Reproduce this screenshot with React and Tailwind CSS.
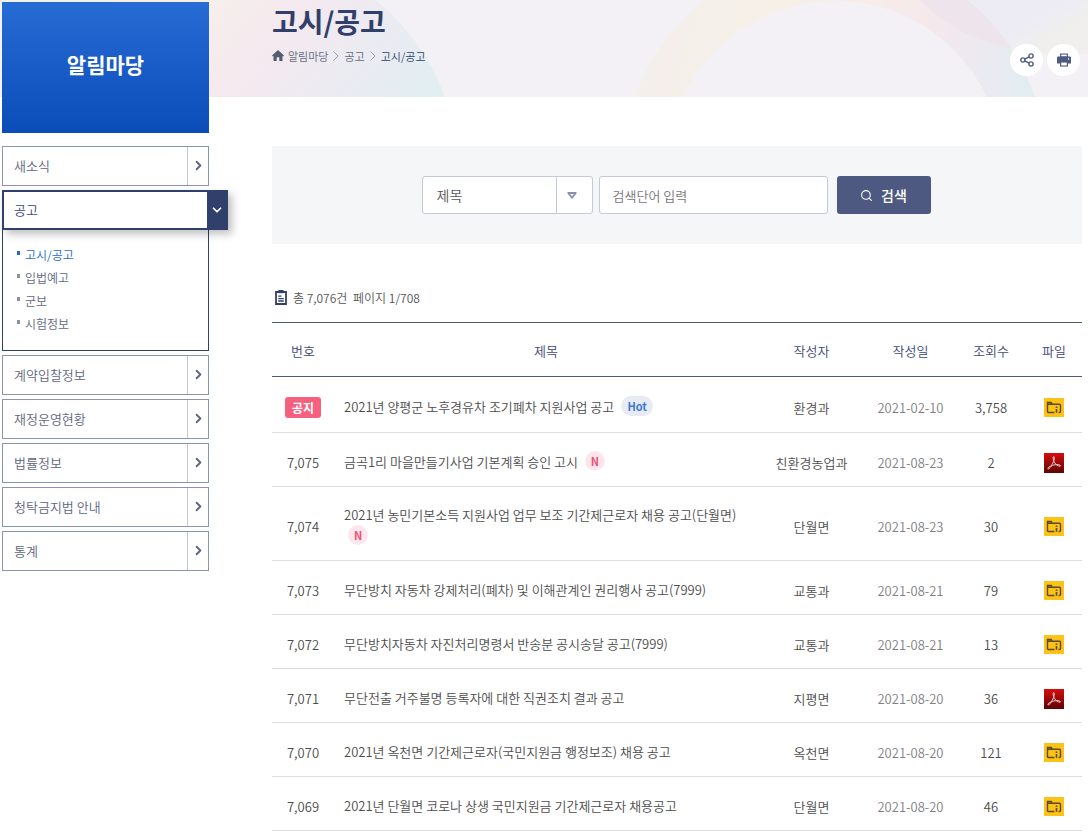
import React from 'react';
import clsx from 'clsx';
import { ChevronDown, ChevronRight, Search } from 'lucide-react';

const menuTop = ['새소식'];
const menuBottom = ['계약입찰정보', '재정운영현황', '법률정보', '청탁금지법 안내', '통계'];
const subMenu = ['고시/공고', '입법예고', '군보', '시험정보'];

const notices = [
  { no: '공지', notice: true, title: '2021년 양평군 노후경유차 조기폐차 지원사업 공고', badge: 'Hot', dept: '환경과', date: '2021-02-10', views: '3,758', file: 'zip' },
  { no: '7,075', title: '금곡1리 마을만들기사업 기본계획 승인 고시', badge: 'N', dept: '친환경농업과', date: '2021-08-23', views: '2', file: 'pdf' },
  { no: '7,074', title: '2021년 농민기본소득 지원사업 업무 보조 기간제근로자 채용 공고(단월면)', badge: 'N', dept: '단월면', date: '2021-08-23', views: '30', file: 'zip' },
  { no: '7,073', title: '무단방치 자동차 강제처리(폐차) 및 이해관계인 권리행사 공고(7999)', dept: '교통과', date: '2021-08-21', views: '79', file: 'zip' },
  { no: '7,072', title: '무단방치자동차 자진처리명령서 반송분 공시송달 공고(7999)', dept: '교통과', date: '2021-08-21', views: '13', file: 'zip' },
  { no: '7,071', title: '무단전출 거주불명 등록자에 대한 직권조치 결과 공고', dept: '지평면', date: '2021-08-20', views: '36', file: 'pdf' },
  { no: '7,070', title: '2021년 옥천면 기간제근로자(국민지원금 행정보조) 채용 공고', dept: '옥천면', date: '2021-08-20', views: '121', file: 'zip' },
  { no: '7,069', title: '2021년 단월면 코로나 상생 국민지원금 기간제근로자 채용공고', dept: '단월면', date: '2021-08-20', views: '46', file: 'zip' },
];

const HeaderBackground = () => (
  <div className="absolute inset-x-0 top-0 h-[97px] overflow-hidden bg-[#f3f1f5]" aria-hidden="true">
    <svg width="1088" height="97" viewBox="0 0 1088 97" fill="none">
      <defs>
        <linearGradient id="disc" gradientUnits="userSpaceOnUse" x1="200" y1="-10" x2="400" y2="150">
          <stop offset="0" stopColor="#f6f0ea" />
          <stop offset="0.35" stopColor="#f4e9ef" />
          <stop offset="0.65" stopColor="#ebebf2" />
          <stop offset="1" stopColor="#e0eff2" />
        </linearGradient>
        <linearGradient id="ring" gradientUnits="userSpaceOnUse" x1="635" y1="0" x2="1037" y2="90">
          <stop offset="0" stopColor="#f3f1ed" />
          <stop offset="0.1" stopColor="#f5eeeb" />
          <stop offset="0.2" stopColor="#f5f0e9" />
          <stop offset="0.45" stopColor="#f6efe4" />
          <stop offset="0.72" stopColor="#f5e8ec" />
          <stop offset="0.84" stopColor="#ece9f1" />
          <stop offset="1" stopColor="#e1eef1" />
        </linearGradient>
        <linearGradient id="corner" gradientUnits="userSpaceOnUse" x1="1034" y1="22" x2="1045" y2="42">
          <stop offset="0" stopColor="#edecf4" />
          <stop offset="1" stopColor="#f0efed" />
        </linearGradient>
      </defs>
      <circle cx="244" cy="168" r="213" fill="url(#disc)" />
      <path d="M920 0C944 24 975 42 1015 54H1088V0Z" fill="url(#corner)" />
      <circle cx="835" cy="168" r="190" stroke="url(#ring)" strokeWidth="45" />
      <path d="M920 0C944 24 975 42 1011 48A213 213 0 0 0 967 0Z" fill="#eee4eb" />
    </svg>
  </div>
);

const MenuLink = ({ label }) => (
  <a href="#" className="flex h-10 border border-[#8a93b2] text-[#5f6680]">
    <span className="flex-1 pl-[11px] text-[13px] leading-[38px]">{label}</span>
    <span className="flex w-[21px] items-center justify-center border-l border-[#c5c8d4] pb-[2px]">
      <ChevronRight size={15} strokeWidth={3} />
    </span>
  </a>
);

const Sidebar = () => (
  <aside className="w-[207px] shrink-0">
    <h2 className="flex h-[131px] items-center justify-center bg-linear-to-b from-[#276bd5] to-[#0b4db8] pb-[6px] text-[21px] font-bold text-white">
      알림마당
    </h2>
    <nav className="mt-[13px] flex flex-col gap-1">
      {menuTop.map((label) => (
        <MenuLink key={label} label={label} />
      ))}
      <div>
        <a href="#" className="relative -mr-[19px] flex h-10 border-2 border-[#313f6b] bg-white text-[#3d4977] shadow-[4px_4px_8px_rgba(0,0,0,0.25)]">
          <span className="flex-1 pl-[10px] text-[13px] leading-9">공고</span>
          <span className="flex w-[19px] items-center justify-center bg-[#313f6b] text-white">
            <ChevronDown size={14} strokeWidth={3} />
          </span>
        </a>
        <ul className="border border-t-0 border-[#313f6b] pt-[13px] pb-[15px] pl-[14px]">
          {subMenu.map((label, i) => (
            <li key={label} className={clsx('flex h-[23px] gap-[5px] text-[12px] leading-[23px]', i === 0 ? 'text-[#2469d0]' : 'text-[#626880]')}>
              <span className={clsx('mt-2 h-1 w-[3px]', i === 0 ? 'bg-[#2469d0]' : 'bg-[#8c90a3]')} />
              <a href="#">{label}</a>
            </li>
          ))}
        </ul>
      </div>
      {menuBottom.map((label) => (
        <MenuLink key={label} label={label} />
      ))}
    </nav>
  </aside>
);

const Crumb = () => (
  <svg width="6" height="10" viewBox="0 0 6 10" fill="none" stroke="#9a9dac" className="mx-[5px]">
    <path d="M0.5 0.5L5 5L0.5 9.5" />
  </svg>
);

const PageHeader = () => (
  <header className="flex h-[97px] justify-between">
    <div>
      <h1 className="mt-px text-[28px] leading-10 font-bold text-[#313f6b]">고시/공고</h1>
      <nav className="mt-[5px] flex h-5 items-center text-[11px] leading-5 text-[#626880]">
        <svg width="12" height="11" viewBox="0 0 12 11" fill="#545b73" className="mr-1 mb-[2px]">
          <path d="M6 0L12 5.5L11.2 6.4L10.5 5.8V11H7.3V7.3H4.7V11H1.5V5.8L0.8 6.4L0 5.5Z" />
        </svg>
        <a href="#">알림마당</a>
        <Crumb />
        <a href="#">공고</a>
        <Crumb />
        <a href="#" className="text-[#313f6b]">고시/공고</a>
      </nav>
    </div>
    <div className="mt-11 mr-[2px] flex gap-1">
      <button type="button" aria-label="공유" className="flex h-8 w-[33px] items-center justify-center rounded-full bg-white">
        <svg width="14" height="14" viewBox="0 0 14 14" fill="none" stroke="#4f5a82" strokeWidth="1.4">
          <circle cx="2.9" cy="7" r="2.1" />
          <circle cx="11" cy="3" r="2.1" />
          <circle cx="11" cy="11" r="2.1" />
          <path d="M4.8 6.1L9.1 3.9M4.8 7.9L9.1 10.1" />
        </svg>
      </button>
      <button type="button" aria-label="인쇄" className="flex h-8 w-[33px] items-center justify-center rounded-full bg-white">
        <svg width="14" height="14" viewBox="0 0 14 14">
          <path d="M3 0.5H11V4H3Z" fill="#4f5a82" />
          <path d="M4.2 1.6H9.8V3.4H4.2Z" fill="#fff" />
          <path d="M1 3.6H13Q14 3.6 14 4.6V10.6H0V4.6Q0 3.6 1 3.6Z" fill="#4f5a82" />
          <path d="M3 8.4H11V13.6H3Z" fill="#4f5a82" />
          <path d="M4.2 9.6H9.8V12.5H4.2Z" fill="#fff" />
          <path d="M11 5.2H12.2V6.4H11Z" fill="#fff" />
        </svg>
      </button>
    </div>
  </header>
);

const SearchBar = () => (
  <form className="mt-[49px] flex h-[98px] items-center justify-center bg-[#f5f6f8] pr-[2px]" onSubmit={(e) => e.preventDefault()}>
    <div className="relative">
      <select aria-label="검색 구분" className="h-[38px] w-[171px] appearance-none rounded-[3px] border border-[#c4c8d8] bg-white pl-[14px] text-[14px] text-[#555]">
        <option>제목</option>
        <option>내용</option>
      </select>
      <span className="pointer-events-none absolute inset-y-px right-px flex w-9 items-center justify-center border-l border-[#c4c8d8]">
        <svg width="10" height="7" viewBox="0 0 10 7" fill="none" stroke="#8a90aa" strokeWidth="1.8" strokeLinejoin="round" className="mr-1">
          <path d="M1.2 1H8.8L5 5.8Z" />
        </svg>
      </span>
    </div>
    <input
      type="text"
      aria-label="검색단어"
      placeholder="검색단어 입력"
      className="ml-[6px] h-[38px] w-[229px] rounded-[3px] border border-[#c4c8d8] bg-white px-[13px] text-[13px] placeholder:text-[#757575]"
    />
    <button type="submit" className="ml-[9px] flex h-[38px] w-[94px] items-center justify-center gap-2 rounded-[3px] bg-[#4e5981] text-[14px] font-medium text-white">
      <Search size={13} strokeWidth={2} />
      검색
    </button>
  </form>
);

const FileIcon = ({ type }) =>
  type === 'pdf' ? (
    <svg width="20" height="20" viewBox="0 0 20 20" fill="none" className="mx-auto block">
      <defs>
        <linearGradient id="pdf" x1="0" y1="0" x2="0" y2="1">
          <stop offset="0" stopColor="#d80c0c" />
          <stop offset="1" stopColor="#5c0505" />
        </linearGradient>
      </defs>
      <rect width="20" height="20" fill="url(#pdf)" />
      <path
        d="M9.6 3.6C8.6 4 9.2 7 10.3 9.2C11.6 11.6 14.4 13.5 16.2 13.2C17.2 12.6 15.4 11.5 12.6 11.6C9 11.8 4.6 13.6 3.9 15.2C3.6 16.4 5.4 16 7 13.4C8.8 10.6 10.6 6.6 10.3 4.4Q10 3.4 9.6 3.6Z"
        stroke="#f3dede"
        strokeWidth="0.9"
      />
    </svg>
  ) : (
    <svg width="20" height="19" viewBox="0 0 20 19" fill="none" className="mx-auto block">
      <rect width="20" height="19" fill="#fdc218" />
      <path d="M10.4 14.5H4.6Q3.5 14.5 3.5 13.4V4.5H7.2L8.4 6.3H15.4Q16.5 6.3 16.5 7.4V13.4Q16.5 14.5 15.4 14.5H14.6M3.5 6.3H8.4" stroke="#5b4a1c" strokeWidth="1.4" />
      <path d="M12.5 8.6V10M12.5 11V14.8" stroke="#5b4a1c" strokeWidth="1.6" />
    </svg>
  );

const Badge = ({ label }) => (
  <span
    className={clsx(
      'ml-1 inline-block h-5 rounded-full text-center align-[1px] text-[11px] leading-5 font-bold',
      label === 'Hot' ? 'w-8 bg-[#e8ebf4] text-[#3c78d8]' : 'w-5 bg-[#fde7ed] text-[#ee4f76]'
    )}
  >
    {label}
  </span>
);

const NoticeTable = () => (
  <table className="w-full table-fixed border-t border-[#4e5981] text-center text-[13px] leading-5 text-[#4d4d4d]">
    <colgroup>
      <col className="w-[62px]" />
      <col />
      <col className="w-[107px]" />
      <col className="w-[91px]" />
      <col className="w-[70px]" />
      <col className="w-14" />
    </colgroup>
    <thead>
      <tr className="h-[54px] border-b border-[#4e5981] text-[#3d4977]">
        {['번호', '제목', '작성자', '작성일', '조회수', '파일'].map((label) => (
          <th key={label} scope="col" className="pt-[2px] font-[350]">{label}</th>
        ))}
      </tr>
    </thead>
    <tbody>
      {notices.map((row) => (
        <tr key={row.no} className={clsx('border-b border-[#dedede]', row.notice ? 'h-14' : 'h-[54px]')}>
          <td className="pt-[6px]">
            {row.notice ? (
              <span className="inline-block w-9 rounded-[3px] bg-[#f6607f] text-[12px] leading-[21px] font-bold text-white">{row.no}</span>
            ) : (
              row.no
            )}
          </td>
          <td className="px-[10px] pt-[18px] pb-[14px] text-left">
            <a href="#">{row.title}</a>
            {row.badge && ' '}
            {row.badge && <Badge label={row.badge} />}
          </td>
          <td className="pt-[6px]">{row.dept}</td>
          <td className="pt-[6px] text-[#808080]">{row.date}</td>
          <td className="pt-[6px]">{row.views}</td>
          <td className="pt-[6px]">
            <a href="#" aria-label="첨부파일">
              <FileIcon type={row.file} />
            </a>
          </td>
        </tr>
      ))}
    </tbody>
  </table>
);

export default function App() {
  return (
    <div className="relative bg-white font-['Noto_Sans_CJK_KR','Noto_Sans_KR',sans-serif] font-[350]">
      <HeaderBackground />
      <div className="relative flex pt-[2px] pr-[6px] pl-[2px]">
        <Sidebar />
        <main className="-mt-[2px] ml-[63px] min-w-0 flex-1">
          <PageHeader />
          <SearchBar />
          <div className="mt-[42px] flex h-9 items-start gap-[6px] pl-[3px] text-[12px] leading-6 text-[#555]">
            <svg width="12" height="15" viewBox="0 0 12 15" fill="none" className="mt-1">
              <path d="M1 2H11V14H1Z" stroke="#313f6b" strokeWidth="1.8" />
              <path d="M3.5 0H8.5V3.2H3.5Z" fill="#313f6b" />
              <path d="M3.2 6.2H6.5M3.2 8.6H8.8M3.2 11H8.8" stroke="#313f6b" strokeWidth="1.3" />
            </svg>
            <p>
              총 7,076건 <span className="ml-[3px]">페이지 1/708</span>
            </p>
          </div>
          <NoticeTable />
        </main>
      </div>
    </div>
  );
}
